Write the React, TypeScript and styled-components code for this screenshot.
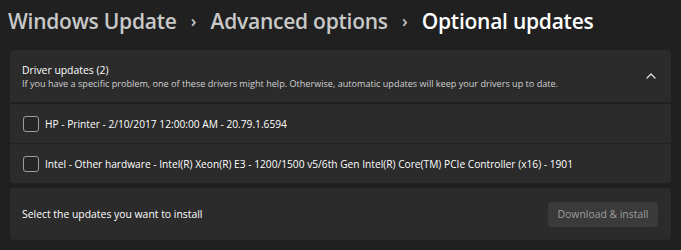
import React from 'react';
import styled, { createGlobalStyle } from 'styled-components';

const GlobalStyle = createGlobalStyle`
  html, body {
    margin: 0;
    padding: 0;
    background: #202020;
  }
  body {
    font-family: "Open Sans", "Noto Sans", sans-serif;
    color: #ffffff;
  }
`;

const Page = styled.div`
  width: 681px;
  height: 250px;
  overflow: hidden;
  background: #202020;
`;

const Breadcrumb = styled.h1`
  margin: 0;
  height: 41px;
  padding: 0 0 0 8px;
  display: flex;
  align-items: center;
  font-size: 21px;
  font-weight: 600;
  letter-spacing: -0.25px;
  white-space: nowrap;
`;

const Crumb = styled.span<{ $current?: boolean }>`
  color: ${p => (p.$current ? '#ffffff' : '#c8c8c8')};
`;

const Sep = styled.span`
  display: inline-flex;
  width: 34px;
  justify-content: center;
  font-size: 17px;
  color: #c8c8c8;
`;

const Content = styled.div`
  display: flex;
  flex-direction: column;
  padding: 9px 10px 0 10px;
`;

const Card = styled.div`
  background: #2b2b2b;
  border-radius: 4px;
`;

const HeaderCard = styled(Card)`
  height: 52px;
  display: flex;
  align-items: center;
  padding: 0 12px;
  border-radius: 4px 4px 0 0;
`;

const HeaderText = styled.div`
  flex: 1;
  display: flex;
  flex-direction: column;
  gap: 1px;
`;

const Title = styled.div`
  font-size: 10.4px;
  line-height: 14px;
  color: #ffffff;
`;

const Subtitle = styled.div`
  font-size: 9.1px;
  line-height: 12px;
  color: #d0d0d0;
`;

const Chevron = styled.svg`
  width: 12px;
  height: 12px;
  margin-right: 2px;
`;

const List = styled(Card)`
  margin-top: 2px;
  border-radius: 0 0 4px 4px;
  display: flex;
  flex-direction: column;
`;

const Row = styled.label<{ $last?: boolean }>`
  height: 39px;
  display: flex;
  align-items: center;
  gap: 6px;
  padding: 0 13px;
  border-bottom: ${p => (p.$last ? 'none' : '1px solid #232323')};
  font-size: 10.2px;
  color: #ffffff;
  white-space: nowrap;
`;

const Box = styled.span`
  width: 14px;
  height: 14px;
  border: 1px solid #9c9c9c;
  border-radius: 3px;
  background: #262626;
  flex: none;
`;

const Footer = styled(Card)`
  margin-top: 5px;
  height: 52px;
  display: flex;
  align-items: center;
  justify-content: space-between;
  padding: 0 13px 0 12px;
`;

const FooterText = styled.span`
  font-size: 10.4px;
  color: #ffffff;
`;

const InstallButton = styled.button`
  height: 25px;
  width: 110px;
  border: none;
  border-radius: 4px;
  background: #3a3a3a;
  color: #9d9d9d;
  font-family: inherit;
  font-size: 10.4px;
  padding: 0;
`;

const drivers = [
  'HP - Printer - 2/10/2017 12:00:00 AM - 20.79.1.6594',
  'Intel - Other hardware - Intel(R) Xeon(R) E3 - 1200/1500 v5/6th Gen Intel(R) Core(TM) PCIe Controller (x16) - 1901',
];

export default function App() {
  return (
    <Page>
      <GlobalStyle />
      <Breadcrumb>
        <Crumb>Windows Update</Crumb>
        <Sep>›</Sep>
        <Crumb>Advanced options</Crumb>
        <Sep>›</Sep>
        <Crumb $current>Optional updates</Crumb>
      </Breadcrumb>
      <Content>
        <HeaderCard>
          <HeaderText>
            <Title>Driver updates (2)</Title>
            <Subtitle>
              If you have a specific problem, one of these drivers might help. Otherwise, automatic updates will keep your drivers up to date.
            </Subtitle>
          </HeaderText>
          <Chevron viewBox="0 0 12 12">
            <path d="M2 8 L6 4 L10 8" fill="none" stroke="#e0e0e0" strokeWidth="1.2" strokeLinecap="round" strokeLinejoin="round" />
          </Chevron>
        </HeaderCard>
        <List>
          {drivers.map((d, i) => (
            <Row key={d} $last={i === drivers.length - 1}>
              <Box />
              {d}
            </Row>
          ))}
        </List>
        <Footer>
          <FooterText>Select the updates you want to install</FooterText>
          <InstallButton disabled>Download &amp; install</InstallButton>
        </Footer>
      </Content>
    </Page>
  );
}
